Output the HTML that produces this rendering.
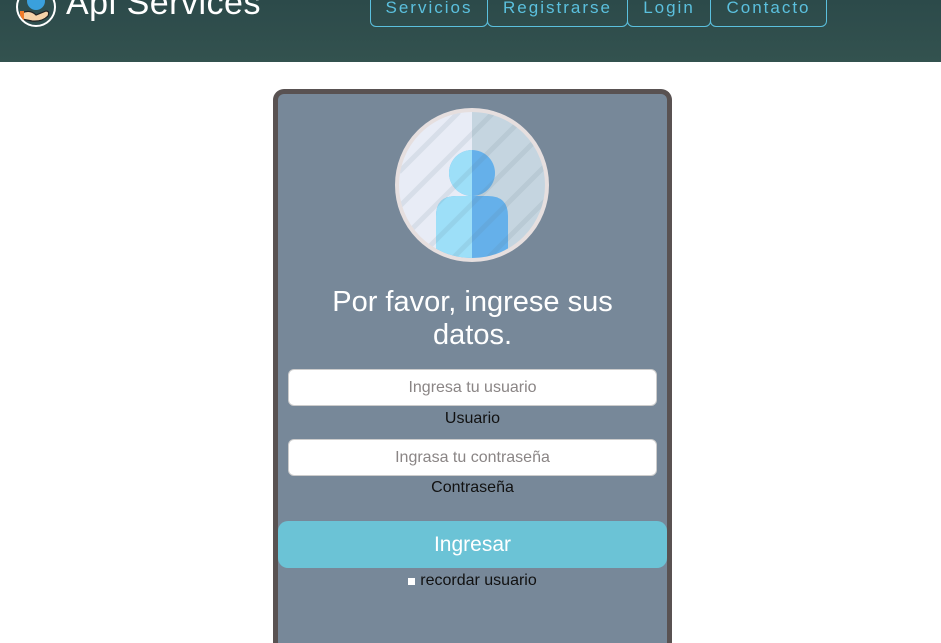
<!DOCTYPE html>
<html style="height:643px;overflow:hidden"><head><style>
body{margin:0;width:941px;height:643px;overflow:hidden;background:#fff;font-family:"Liberation Sans",sans-serif;position:relative}
.hdr{position:absolute;left:0;top:0;width:941px;height:62px;background:linear-gradient(#2c4a4a,#33524f)}
.logo{position:absolute;left:16px;top:-13px;width:36px;height:36px;border:2px solid #fff;border-radius:50%;background:#2f4f4f;overflow:hidden}
.title{position:absolute;left:66px;top:-16px;color:#fff;font-size:34px;letter-spacing:0.5px}
.nav{position:absolute;top:-4px;height:31px;border:1px solid #5bc0de;border-radius:0 0 6px 6px;color:#5bc0de;font-size:17px;letter-spacing:2px;text-align:center;line-height:22px;box-sizing:border-box}
.card{position:absolute;left:273px;top:89px;width:399px;height:560px;box-sizing:border-box;border:5px solid #595252;border-bottom:none;border-radius:11px 11px 0 0;background:#778899}
.av{position:absolute;left:395px;top:108px;width:154px;height:154px;box-sizing:border-box;border:4px solid #e6dfdf;border-radius:50%;overflow:hidden;background:linear-gradient(90deg,#e8ecf6 50%,#c5d5e0 50%)}
h1{position:absolute;left:302px;width:341px;top:286px;margin:0;text-align:center;color:#fff;font-weight:normal;font-size:29px;line-height:33px}
.in{position:absolute;left:288px;width:369px;height:37px;box-sizing:border-box;background:#fff;border:1px solid #ccc;border-radius:6px;color:#8a8585;font-size:16px;text-align:center;line-height:35px}
.lb{position:absolute;left:278px;width:389px;text-align:center;font-size:16px;color:#111}
.btn{position:absolute;left:278px;top:521px;width:389px;height:47px;background:#6bc3d6;border-radius:10px;color:#fff;font-size:21px;text-align:center;line-height:47px}
</style></head><body>
<div class="hdr">
<div class="logo"><svg width="36" height="36" viewBox="0 0 36 36"><circle cx="18" cy="12" r="9" fill="#3aa0dd"/><path d="M4 24 Q12 20 18 26 L28 22 Q32 22 30 27 Q24 33 14 32 L4 30Z" fill="#f5d2a8" stroke="#222" stroke-width="1.2"/><rect x="2" y="22" width="4" height="9" fill="#f07b2a"/></svg></div>
<div class="title">Api Services</div>
<div class="nav" style="left:370px;width:118px">Servicios</div>
<div class="nav" style="left:487px;width:141px">Registrarse</div>
<div class="nav" style="left:627px;width:84px">Login</div>
<div class="nav" style="left:710px;width:117px">Contacto</div>
</div>
<div class="card"></div>
<div class="av"><svg width="146" height="146" viewBox="0 0 146 146" style="position:absolute;left:0;top:0">
<defs><clipPath id="l"><rect x="0" y="0" width="73" height="146"/></clipPath></defs>
<circle cx="73" cy="61" r="23" fill="#65b0ea"/><path d="M37 150 V104 Q37 84 57 84 H89 Q109 84 109 104 V150Z" fill="#65b0ea"/>
<g clip-path="url(#l)"><circle cx="73" cy="61" r="23" fill="#9ddff8"/><path d="M37 150 V104 Q37 84 57 84 H89 Q109 84 109 104 V150Z" fill="#9ddff8"/></g>
<g stroke="rgba(100,120,140,0.12)" stroke-width="5"><path d="M0 60 L60 0M0 95 L95 0M0 130 L130 0M10 155 L155 10M45 155 L155 45M80 155 L155 80M115 155 L155 115"/></g>
</svg></div>
<h1>Por favor, ingrese sus datos.</h1>
<div class="in" style="top:369px">Ingresa tu usuario</div>
<div class="lb" style="top:410px">Usuario</div>
<div class="in" style="top:439px">Ingrasa tu contraseña</div>
<div class="lb" style="top:479px">Contraseña</div>
<div class="btn">Ingresar</div>
<div class="lb" style="top:572px"><span style="display:inline-block;width:7px;height:7px;background:#fff;margin-right:5px"></span>recordar usuario</div>
</body></html>
